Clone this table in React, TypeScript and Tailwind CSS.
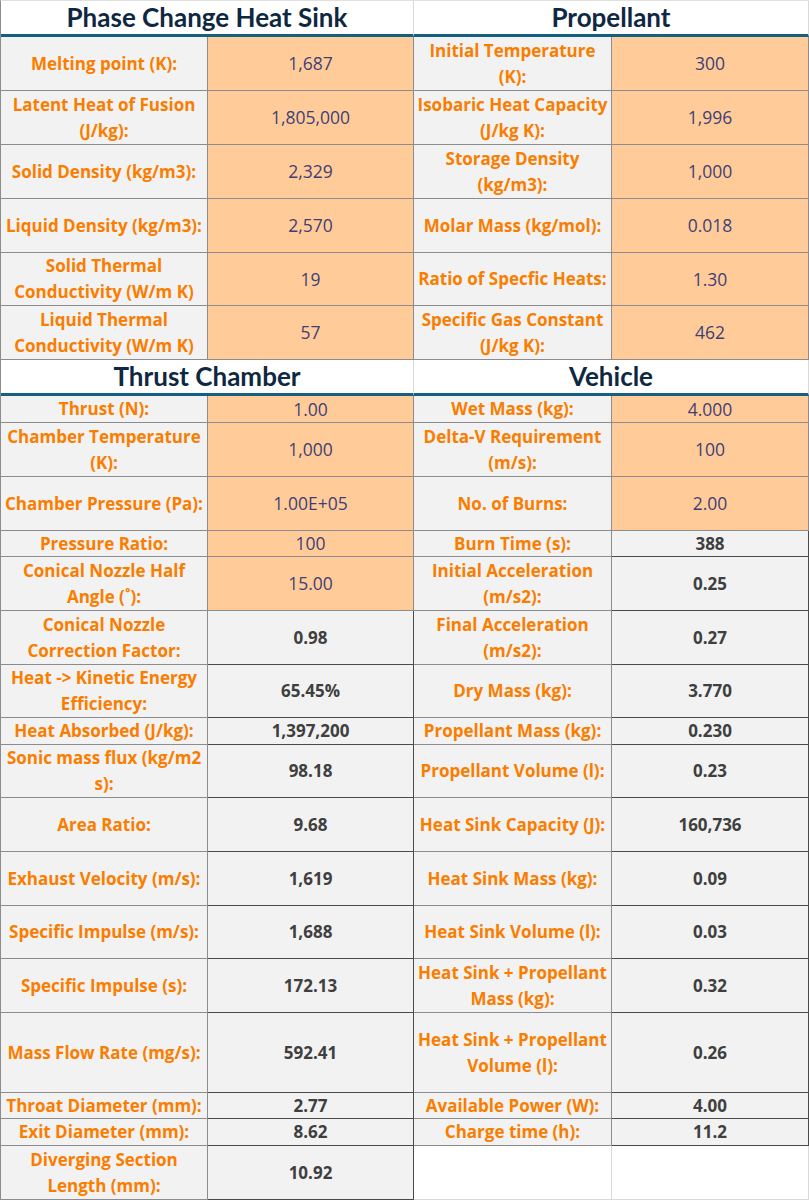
type Kind = "input" | "calc";

interface Side {
  label: string[];
  value: string;
  kind: Kind;
}

interface RowType {
  h: string;
  left: Side;
  right: Side | null;
}

const font = { fontFamily: "'Open Sans', 'Liberation Sans', sans-serif" };
const headFont = { fontFamily: "Lato, 'Liberation Sans', sans-serif" };

const top: RowType[] = [
  { h: "h-[54px]", left: { label: ["Melting point (K):"], value: "1,687", kind: "input" }, right: { label: ["Initial Temperature", "(K):"], value: "300", kind: "input" } },
  { h: "h-[54px]", left: { label: ["Latent Heat of Fusion", "(J/kg):"], value: "1,805,000", kind: "input" }, right: { label: ["Isobaric Heat Capacity", "(J/kg K):"], value: "1,996", kind: "input" } },
  { h: "h-[54px]", left: { label: ["Solid Density (kg/m3):"], value: "2,329", kind: "input" }, right: { label: ["Storage Density", "(kg/m3):"], value: "1,000", kind: "input" } },
  { h: "h-[54px]", left: { label: ["Liquid Density (kg/m3):"], value: "2,570", kind: "input" }, right: { label: ["Molar Mass (kg/mol):"], value: "0.018", kind: "input" } },
  { h: "h-[53px]", left: { label: ["Solid Thermal", "Conductivity (W/m K)"], value: "19", kind: "input" }, right: { label: ["Ratio of Specfic Heats:"], value: "1.30", kind: "input" } },
  { h: "h-[54px]", left: { label: ["Liquid Thermal", "Conductivity (W/m K)"], value: "57", kind: "input" }, right: { label: ["Specific Gas Constant", "(J/kg K):"], value: "462", kind: "input" } },
];

const bottom: RowType[] = [
  { h: "h-[27px]", left: { label: ["Thrust (N):"], value: "1.00", kind: "input" }, right: { label: ["Wet Mass (kg):"], value: "4.000", kind: "input" } },
  { h: "h-[54px]", left: { label: ["Chamber Temperature", "(K):"], value: "1,000", kind: "input" }, right: { label: ["Delta-V Requirement", "(m/s):"], value: "100", kind: "input" } },
  { h: "h-[54px]", left: { label: ["Chamber Pressure (Pa):"], value: "1.00E+05", kind: "input" }, right: { label: ["No. of Burns:"], value: "2.00", kind: "input" } },
  { h: "h-[26px]", left: { label: ["Pressure Ratio:"], value: "100", kind: "input" }, right: { label: ["Burn Time (s):"], value: "388", kind: "calc" } },
  { h: "h-[54px]", left: { label: ["Conical Nozzle Half", "Angle (\u02DA):"], value: "15.00", kind: "input" }, right: { label: ["Initial Acceleration", "(m/s2):"], value: "0.25", kind: "calc" } },
  { h: "h-[54px]", left: { label: ["Conical Nozzle", "Correction Factor:"], value: "0.98", kind: "calc" }, right: { label: ["Final Acceleration", "(m/s2):"], value: "0.27", kind: "calc" } },
  { h: "h-[53px]", left: { label: ["Heat -> Kinetic Energy", "Efficiency:"], value: "65.45%", kind: "calc" }, right: { label: ["Dry Mass (kg):"], value: "3.770", kind: "calc" } },
  { h: "h-[27px]", left: { label: ["Heat Absorbed (J/kg):"], value: "1,397,200", kind: "calc" }, right: { label: ["Propellant Mass (kg):"], value: "0.230", kind: "calc" } },
  { h: "h-[53px]", left: { label: ["Sonic mass flux (kg/m2", "s):"], value: "98.18", kind: "calc" }, right: { label: ["Propellant Volume (l):"], value: "0.23", kind: "calc" } },
  { h: "h-[54px]", left: { label: ["Area Ratio:"], value: "9.68", kind: "calc" }, right: { label: ["Heat Sink Capacity (J):"], value: "160,736", kind: "calc" } },
  { h: "h-[54px]", left: { label: ["Exhaust Velocity (m/s):"], value: "1,619", kind: "calc" }, right: { label: ["Heat Sink Mass (kg):"], value: "0.09", kind: "calc" } },
  { h: "h-[53px]", left: { label: ["Specific Impulse (m/s):"], value: "1,688", kind: "calc" }, right: { label: ["Heat Sink Volume (l):"], value: "0.03", kind: "calc" } },
  { h: "h-[54px]", left: { label: ["Specific Impulse (s):"], value: "172.13", kind: "calc" }, right: { label: ["Heat Sink + Propellant", "Mass (kg):"], value: "0.32", kind: "calc" } },
  { h: "h-[80px]", left: { label: ["Mass Flow Rate (mg/s):"], value: "592.41", kind: "calc" }, right: { label: ["Heat Sink + Propellant", "Volume (l):"], value: "0.26", kind: "calc" } },
  { h: "h-[26px]", left: { label: ["Throat Diameter (mm):"], value: "2.77", kind: "calc" }, right: { label: ["Available Power (W):"], value: "4.00", kind: "calc" } },
  { h: "h-[27px]", left: { label: ["Exit Diameter (mm):"], value: "8.62", kind: "calc" }, right: { label: ["Charge time (h):"], value: "11.2", kind: "calc" } },
  { h: "h-[54px]", left: { label: ["Diverging Section", "Length (mm):"], value: "10.92", kind: "calc" }, right: null },
];

const Label = ({ lines, w }: { lines: string[]; w: string }) => (
  <div className={`${w} shrink-0 overflow-hidden flex flex-col items-center justify-center bg-[#f2f2f2] border-r border-b border-[#8c8c8c] text-[17px] font-bold leading-[26px] text-[#fa7d00]`}>
    {lines.map((l) => (
      <div key={l} className="whitespace-nowrap">{l}</div>
    ))}
  </div>
);

const Value = ({ value, kind, w }: { value: string; kind: Kind; w: string }) => {
  if (kind === "input")
    return (
      <div className={`${w} shrink-0 overflow-hidden flex items-center justify-center bg-[#ffcc99] border-r border-b border-[#8c8c8c] text-[17.5px] text-[#3f3f76]`}>
        {value}
      </div>
    );
  return (
    <div className={`${w} shrink-0 overflow-hidden flex items-center justify-center bg-[#f2f2f2] border-r border-b border-[#4a4a4a] text-[17px] font-bold text-[#3f3f3f]`}>
      {value}
    </div>
  );
};

const Row = ({ row }: { row: RowType }) => (
  <div className={`flex ${row.h}`}>
    <Label lines={row.left.label} w="w-[207px]" />
    <Value value={row.left.value} kind={row.left.kind} w="w-[206px]" />
    {row.right ? (
      <>
        <Label lines={row.right.label} w="w-[198px]" />
        <Value value={row.right.value} kind={row.right.kind} w="w-[197px]" />
      </>
    ) : (
      <>
        <div className="w-[198px] shrink-0 bg-white border-r border-b border-[#d9d9d9]" />
        <div className="w-[197px] shrink-0 bg-white border-r border-b border-[#d9d9d9]" />
      </>
    )}
  </div>
);

const Header = ({ left, right, h }: { left: string; right: string; h: string }) => (
  <div className={`flex ${h}`} style={headFont}>
    <div className="w-[413px] shrink-0 flex items-center justify-center bg-white border-r border-r-[#d9d9d9] border-b-[3px] border-b-[#156082] text-[26px] font-bold text-[#0e2841]">
      {left}
    </div>
    <div className="w-[395px] shrink-0 flex items-center justify-center bg-white border-r border-r-[#d9d9d9] border-b-[3px] border-b-[#156082] text-[26px] font-bold text-[#0e2841]">
      {right}
    </div>
  </div>
);

export default function App() {
  return (
    <div className="w-[809px] h-[1200px] overflow-hidden bg-white border-l border-t border-l-[#8c8c8c] border-t-[#e0e0e0]" style={font}>
      <Header left="Phase Change Heat Sink" right="Propellant" h="h-[36px]" />
      {top.map((r, i) => (
        <Row key={i} row={r} />
      ))}
      <Header left="Thrust Chamber" right="Vehicle" h="h-[36px]" />
      {bottom.map((r, i) => (
        <Row key={i} row={r} />
      ))}
    </div>
  );
}
